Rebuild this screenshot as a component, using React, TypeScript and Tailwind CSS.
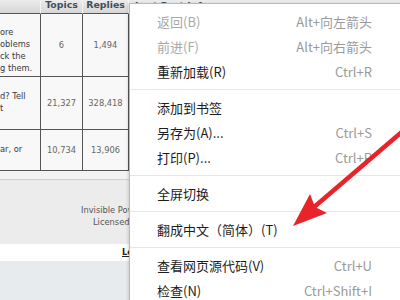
import React from 'react';

type Item = { label: string; shortcut?: string; disabled?: boolean } | 'sep';

const items: Item[] = [
  { label: '返回(B)', shortcut: 'Alt+向左箭头', disabled: true },
  { label: '前进(F)', shortcut: 'Alt+向右箭头', disabled: true },
  { label: '重新加载(R)', shortcut: 'Ctrl+R' },
  'sep',
  { label: '添加到书签' },
  { label: '另存为(A)...', shortcut: 'Ctrl+S' },
  { label: '打印(P)...', shortcut: 'Ctrl+P' },
  'sep',
  { label: '全屏切换' },
  'sep',
  { label: '翻成中文（简体）(T)' },
  'sep',
  { label: '查看网页源代码(V)', shortcut: 'Ctrl+U' },
  { label: '检查(N)', shortcut: 'Ctrl+Shift+I' },
];

const rows = [
  { lines: ['', 'ore', 'oblems', 'ck the', 'g them.'], topics: '6', replies: '1,494', h: 'h-[63px]' },
  { lines: ['d? Tell', 't'], topics: '21,327', replies: '328,418', h: 'h-[53px]' },
  { lines: ['ar, or'], topics: '10,734', replies: '13,906', h: 'h-[41px]' },
];

const cell = 'border-r border-b border-[#555] bg-[#f8f8f8] flex items-center';

const ForumPage: React.FC = () => (
  <div className="flex flex-col font-['DejaVu_Sans',sans-serif] text-[8.3px]">
    <div className="grid grid-cols-[41px_42px_46px_1fr]">
      <div className="h-[14px] bg-linear-to-b from-[#ececec] to-[#d6d6d6] border-r border-[#f4f4f4] border-b-[#555] border-b" />
      <div className="h-[14px] bg-linear-to-b from-[#ececec] to-[#d6d6d6] border-r border-[#f4f4f4] border-b border-b-[#555] flex items-center justify-center text-[9.4px] font-bold text-[#3f4e5c] leading-none pb-[3px]">
        Topics
      </div>
      <div className="h-[14px] bg-linear-to-b from-[#ececec] to-[#d6d6d6] border-r border-[#f4f4f4] border-b border-b-[#555] flex items-center justify-center text-[9.4px] font-bold text-[#3f4e5c] leading-none pb-[3px]">
        Replies
      </div>
      <div className="h-[14px] bg-linear-to-b from-[#ececec] to-[#d6d6d6] border-b border-b-[#555] flex items-start pl-[6px] text-[9.4px] font-bold text-[#3f4e5c] leading-none pt-[1px]">
        Last Post Info
      </div>

      {rows.map((r, i) => (
        <React.Fragment key={i}>
          <div className={`${cell} ${r.h} flex-col justify-center items-start text-[#3a3a3a] leading-[11.8px] overflow-hidden`}>
            {r.lines.map((l, j) => (
              <div key={j} className="h-[11.8px] whitespace-nowrap">{l}</div>
            ))}
          </div>
          <div className={`${cell} ${r.h} justify-center text-[#666]`}>{r.topics}</div>
          <div className={`${cell} ${r.h} justify-center text-[#666]`}>{r.replies}</div>
          <div className={`border-b border-[#555] bg-[#f8f8f8] ${r.h}`} />
        </React.Fragment>
      ))}
    </div>

    <div className="h-[9px] bg-[#f3f3f3] border-b border-[#cfcfcf]" />
    <div className="h-[64px] bg-[#ececec] pt-[24px] text-[#555] leading-[12px] whitespace-nowrap">
      <div className="w-[129px] overflow-hidden flex flex-col">
        <div className="pl-[81px]">Invisible Power</div>
        <div className="pl-[93px]">Licensed to:</div>
      </div>
    </div>
    <div className="h-[17px] bg-white flex items-center">
      <div className="w-[129px] overflow-hidden pl-[122px] font-bold text-[#222] underline whitespace-nowrap">
        Log In
      </div>
    </div>
    <div className="h-[40px] bg-[#e8ebee]" />
  </div>
);

const ContextMenu: React.FC = () => (
  <div className="absolute left-[129px] top-[3px] w-[275px] h-[310px] bg-white border-l border-t border-[#b9b9b9] shadow-[-1px_1px_3px_rgba(0,0,0,0.15)] pt-[5px] font-['Noto_Sans_CJK_SC','Noto_Sans',sans-serif] text-[13px]">
    {items.map((it, i) =>
      it === 'sep' ? (
        <div key={i} className="py-[5px]">
          <div className="h-px bg-[#e6e6e6]" />
        </div>
      ) : (
        <div
          key={i}
          className="h-[25px] flex items-center justify-between pl-[27px] pr-[32px] leading-none whitespace-nowrap"
        >
          <span className={it.disabled ? 'text-[#a8a8a8]' : 'text-[#1c1c1c]'}>{it.label}</span>
          {it.shortcut && <span className="text-[#9a9a9a]">{it.shortcut}</span>}
        </div>
      )
    )}
  </div>
);

const RedArrow: React.FC = () => (
  <svg className="absolute left-0 top-0 pointer-events-none" width="400" height="300" viewBox="0 0 400 300">
    <line x1="404" y1="130" x2="313" y2="208" stroke="#e8232a" strokeWidth="4.5" strokeLinecap="round" />
    <polygon points="293,226 327,213 315,207 310,194" fill="#e8232a" />
  </svg>
);

export default function App() {
  return (
    <div className="relative w-[400px] h-[300px] overflow-hidden bg-[#e8ebee]">
      <ForumPage />
      <ContextMenu />
      <RedArrow />
    </div>
  );
}
